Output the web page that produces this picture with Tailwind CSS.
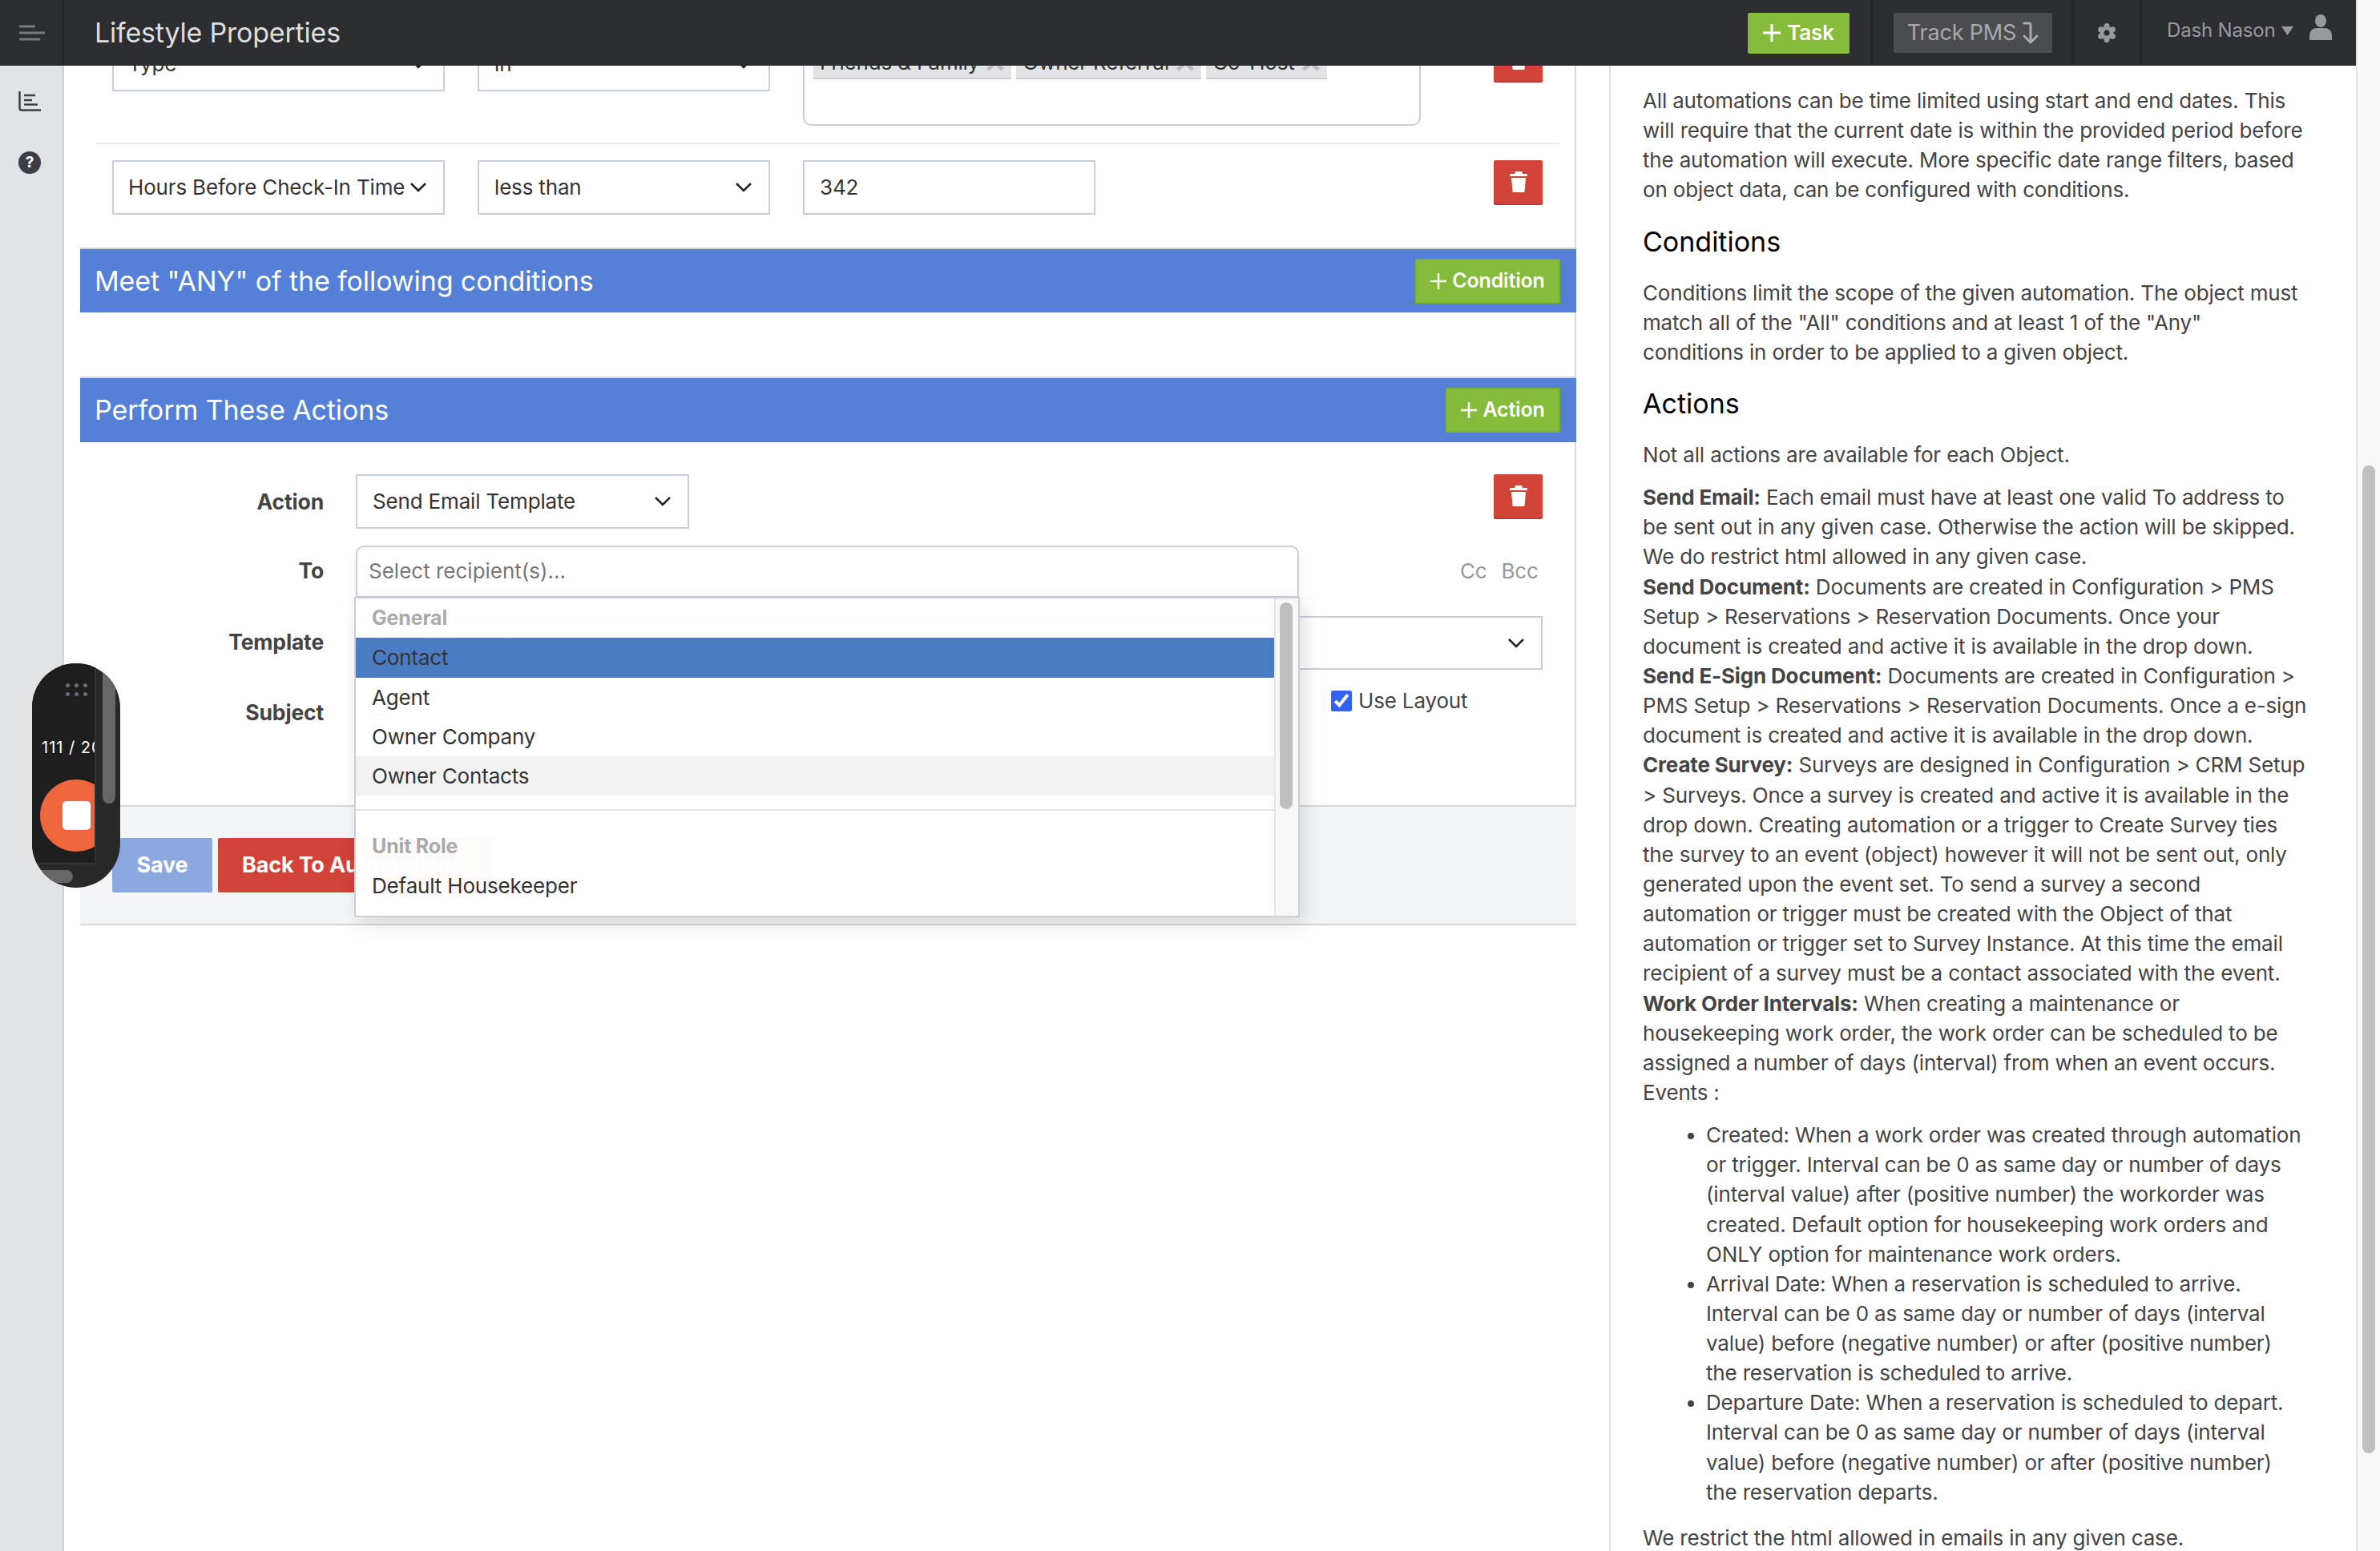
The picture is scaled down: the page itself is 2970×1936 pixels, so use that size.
<!DOCTYPE html>
<html>
  <head>
    <meta charset="UTF-8" />
    <title>Lifestyle Properties</title>
    <script src="https://cdn.jsdelivr.net/npm/@tailwindcss/browser@4"></script>
  </head>
  <body class="w-[2970px] h-[1936px] overflow-hidden flex bg-white text-[26px] leading-[37.14px] tracking-[-0.17px] text-[#444] font-['Inter','Liberation_Sans',sans-serif]">
    <div class="w-[2940px] flex flex-col relative">
      <!-- top bar -->
      <header class="h-[82px] shrink-0 flex items-stretch bg-[#2c2d31] relative z-30">
        <div class="w-[80px] border-r-2 border-[#232427] pl-[24px] flex items-center">
          <svg width="33" height="20" viewBox="0 0 33 20" fill="none" stroke="#77787c" stroke-width="3"><path d="M0 2H20M0 10H32M0 18H26" /></svg>
        </div>
        <div class="pl-[38px] flex items-center text-[34px] tracking-[-0.2px] text-[#dedede]">Lifestyle Properties</div>
        <div class="flex-1 flex justify-end items-center pr-[27px] border-r-2 border-[#232427]">
          <div class="w-[127px] h-[51px] bg-[#86bc3a] rounded-[2px] flex items-center justify-center gap-[8px] text-white font-semibold text-[26px]">
            <svg width="22" height="22" viewBox="0 0 22 22" stroke="#fff" stroke-width="3"><path d="M11 0V22M0 11H22" /></svg>
            Task
          </div>
        </div>
        <div class="w-[250px] flex items-center pl-[26px] border-r-2 border-[#232427]">
          <div class="w-[198px] h-[50px] bg-[#4b4c50] rounded-[2px] flex items-center justify-center gap-[8px] text-[#a9aaad] text-[27px]">
            Track PMS
            <svg width="20" height="28" viewBox="0 0 20 28" fill="none" stroke="#a9aaad" stroke-width="3" stroke-linecap="round" stroke-linejoin="round"><path d="M2 2H8Q10 2 10 4V26M2 18L10 26L18 18" /></svg>
          </div>
        </div>
        <div class="w-[86px] flex items-center justify-center border-r-2 border-[#232427]">
          <svg width="24" height="26" viewBox="0 0 24 26" fill="#98999c">
            <circle cx="12" cy="13" r="8.5" />
            <circle cx="12" cy="4.5" r="3.5" /><circle cx="12" cy="21.5" r="3.5" />
            <circle cx="4.6" cy="8.7" r="3.5" /><circle cx="19.4" cy="8.7" r="3.5" />
            <circle cx="4.6" cy="17.3" r="3.5" /><circle cx="19.4" cy="17.3" r="3.5" />
            <circle cx="12" cy="13" r="3.6" fill="#2c2d31" />
          </svg>
        </div>
        <div class="w-[267px] shrink-0 flex items-start pt-[19px] pl-[31px] text-[24px] text-[#98999c]">
          <span>Dash Nason</span>
          <svg class="ml-[7px] mt-[14px]" width="15" height="11" viewBox="0 0 15 11" fill="#98999c"><path d="M0 0H15L7.5 11Z" /></svg>
          <svg class="ml-[20px] -mt-[1px]" width="28" height="32" viewBox="0 0 28 32" fill="#98999c"><ellipse cx="14" cy="8" rx="7" ry="8" /><path d="M0 32V26C0 20 5 17 9 17H19C23 17 28 20 28 26V32Z" /></svg>
        </div>
      </header>

      <div class="flex-1 flex min-h-0">
        <!-- sidebar -->
        <aside class="w-[80px] shrink-0 bg-[#e2e3e5] border-r-2 border-[#cfd0d3] flex flex-col items-start pl-[23px] pt-[32px] gap-[50px]">
          <svg width="28" height="25" viewBox="0 0 28 25" fill="none" stroke="#3b3e49" stroke-width="2.5"><path d="M1.5 0V21Q1.5 23.5 4 23.5H28" /><path stroke-width="2.5" d="M7 5H21M7 11H17M7 16.5H24" /></svg>
          <div class="w-[28px] h-[28px] rounded-full bg-[#3b3e49] text-white text-[19px] leading-[28px] font-bold text-center">?</div>
        </aside>

        <!-- automation form -->
        <main class="w-[1928px] shrink-0 overflow-hidden relative">
          <div class="-mt-[36px] w-[1867px] border-r-2 border-[#d9d9d9] ml-[20px] text-[#333]">
            <div class="mr-[19px] ml-[20px] px-[20px] pb-[21px] border-b-2 border-[#eaeaea] flex items-start">
              <div class="w-[415px] h-[68px] mr-[41px] border-2 border-[#c9ced8] pl-[18px] pr-[21px] flex items-center justify-between">
                <span>Type</span>
                <svg width="20" height="12" viewBox="0 0 20 12" fill="none" stroke="#222" stroke-width="2.5"><path d="M1 1L10 10L19 1" /></svg>
              </div>
              <div class="w-[365px] h-[68px] mr-[41px] border-2 border-[#c9ced8] pl-[19px] pr-[21px] flex items-center justify-between">
                <span>in</span>
                <svg width="20" height="12" viewBox="0 0 20 12" fill="none" stroke="#222" stroke-width="2.5"><path d="M1 1L10 10L19 1" /></svg>
              </div>
              <div class="w-[771px] h-[111px] border-2 border-[#c9ced8] rounded-b-[10px] pl-[11px] pt-[11px] flex items-start gap-[6px]">
                <div class="h-[40px] bg-[#e2e3e5] border-b-2 border-[#cfcfcf] pl-[8px] pr-[9px] flex items-center gap-[9px]">Friends &amp; Family <svg width="22" height="22" viewBox="0 0 24 24" stroke="#bdbdbd" stroke-width="5"><path d="M2 2L22 22M22 2L2 22" /></svg></div>
                <div class="h-[40px] bg-[#e2e3e5] border-b-2 border-[#cfcfcf] pl-[8px] pr-[9px] flex items-center gap-[9px]">Owner Referral <svg width="22" height="22" viewBox="0 0 24 24" stroke="#bdbdbd" stroke-width="5"><path d="M2 2L22 22M22 2L2 22" /></svg></div>
                <div class="h-[40px] bg-[#e2e3e5] border-b-2 border-[#cfcfcf] pl-[8px] pr-[9px] flex items-center gap-[9px]">Co-Host <svg width="22" height="22" viewBox="0 0 24 24" stroke="#bdbdbd" stroke-width="5"><path d="M2 2L22 22M22 2L2 22" /></svg></div>
              </div>
              <div class="ml-auto mr-[1px] mt-[1px] w-[61px] h-[56px] bg-[#d24437] border-b-2 border-[#bb3a2f] rounded-[2px] flex items-center justify-center">
                <svg width="22" height="26" viewBox="0 0 22 26" fill="#fff"><path d="M7 0H15L16 3H22V6H0V3H6ZM2 8H20L18.5 25Q18.4 26 17 26H5Q3.6 26 3.5 25Z" /></svg>
              </div>
            </div>
            <div class="ml-[40px] mr-[39px] pt-[20px] pb-[41px] flex items-start">
              <div class="w-[415px] h-[68px] mr-[41px] border-2 border-[#c9ced8] pl-[18px] pr-[21px] flex items-center justify-between">
                <span>Hours Before Check-In Time</span>
                <svg width="20" height="12" viewBox="0 0 20 12" fill="none" stroke="#222" stroke-width="2.5"><path d="M1 1L10 10L19 1" /></svg>
              </div>
              <div class="w-[365px] h-[68px] mr-[41px] border-2 border-[#c9ced8] pl-[19px] pr-[21px] flex items-center justify-between">
                <span>less than</span>
                <svg width="20" height="12" viewBox="0 0 20 12" fill="none" stroke="#222" stroke-width="2.5"><path d="M1 1L10 10L19 1" /></svg>
              </div>
              <div class="w-[365px] h-[68px] border-2 border-[#c9ced8] pl-[19px] flex items-center">342</div>
              <div class="ml-auto mr-[1px] w-[61px] h-[56px] bg-[#d24437] border-b-2 border-[#bb3a2f] rounded-[2px] flex items-center justify-center">
                <svg width="22" height="26" viewBox="0 0 22 26" fill="#fff"><path d="M7 0H15L16 3H22V6H0V3H6ZM2 8H20L18.5 25Q18.4 26 17 26H5Q3.6 26 3.5 25Z" /></svg>
              </div>
            </div>

            <div class="-mr-[2px] h-[81px] border-t-2 border-[#d5d6da] bg-[#5480d8] pl-[18px] pr-[20px] flex items-center justify-between text-white text-[34px] tracking-[-0.1px]">
              <span>Meet "ANY" of the following conditions</span>
              <div class="w-[181px] h-[56px] bg-[#85bb3b] border-2 border-[#7cb036] flex items-center justify-center gap-[7px] text-[25px] font-semibold tracking-[-0.17px]">
                <svg width="20" height="20" viewBox="0 0 20 20" stroke="#fff" stroke-width="2.5"><path d="M10 0V20M0 10H20" /></svg>
                Condition
              </div>
            </div>
            <div class="h-[80px]"></div>
            <div class="-mr-[2px] h-[82px] border-t-2 border-[#d5d6da] bg-[#5480d8] pl-[18px] pr-[20px] flex items-center justify-between text-white text-[34px] tracking-[-0.1px]">
              <span>Perform These Actions</span>
              <div class="w-[143px] h-[56px] bg-[#85bb3b] border-2 border-[#7cb036] flex items-center justify-center gap-[7px] text-[25px] font-semibold tracking-[-0.17px]">
                <svg width="20" height="20" viewBox="0 0 20 20" stroke="#fff" stroke-width="2.5"><path d="M10 0V20M0 10H20" /></svg>
                Action
              </div>
            </div>

            <div class="pt-[40px] pb-[80px] pr-[40px] flex flex-col">
              <div class="flex items-start h-[68px] mb-[21px]">
                <label class="w-[304px] mr-[40px] h-[68px] leading-[68px] text-right font-bold text-[26.5px] text-[#444]">Action</label>
                <div class="w-[416px] h-[68px] border-2 border-[#c9ced8] pl-[19px] pr-[21px] flex items-center justify-between">
                  <span>Send Email Template</span>
                  <svg width="20" height="12" viewBox="0 0 20 12" fill="none" stroke="#222" stroke-width="2.5"><path d="M1 1L10 10L19 1" /></svg>
                </div>
                <div class="ml-auto w-[61px] h-[56px] bg-[#d24437] border-b-2 border-[#bb3a2f] rounded-[2px] flex items-center justify-center">
                  <svg width="22" height="26" viewBox="0 0 22 26" fill="#fff"><path d="M7 0H15L16 3H22V6H0V3H6ZM2 8H20L18.5 25Q18.4 26 17 26H5Q3.6 26 3.5 25Z" /></svg>
                </div>
              </div>
              <div class="flex items-start h-[65px] mb-[23px]">
                <label class="w-[304px] mr-[40px] h-[63px] leading-[63px] text-right font-bold text-[26.5px] text-[#444]">To</label>
                <div class="w-[1177px] h-[65px] border-2 border-[#c9ced8] rounded-t-[10px] pl-[14px] pb-[2px] flex items-center text-[#777] tracking-normal relative shadow-[0_4px_8px_rgba(0,0,0,0.06)]">Select recipient(s)...</div>
                <div class="ml-[201px] h-[63px] leading-[63px] text-[#999] flex gap-[18px]"><span>Cc</span><span>Bcc</span></div>
              </div>
              <div class="flex items-start h-[67px] mb-[21px]">
                <label class="w-[304px] mr-[40px] h-[65px] leading-[65px] text-right font-bold text-[26.5px] text-[#444]">Template</label>
                <div class="flex-1 h-[67px] border-2 border-[#c9ced8] pl-[19px] pr-[21px] flex items-center justify-between">
                  <span>Select Template</span>
                  <svg width="20" height="12" viewBox="0 0 20 12" fill="none" stroke="#222" stroke-width="2.5"><path d="M1 1L10 10L19 1" /></svg>
                </div>
              </div>
              <div class="flex items-start h-[68px]">
                <label class="w-[304px] mr-[40px] h-[64px] leading-[64px] text-right font-bold text-[26.5px] text-[#444]">Subject</label>
                <div class="w-[1177px] h-[68px] pl-[21px] flex items-center">--</div>
                <label class="ml-[40px] flex items-center gap-[8px] h-[36px] text-[#444]">
                  <input type="checkbox" checked class="w-[26px] h-[26px] accent-[#2f62f5]" />
                  Use Layout
                </label>
              </div>
            </div>

            <div class="h-[150px] -mr-[2px] bg-[#f4f5f7] border-y-2 border-[#d5d6da] pl-[40px] pt-[39px] flex items-start gap-[7px] text-white font-bold text-[27px]">
              <div class="w-[125px] h-[68px] rounded-[2px] bg-[#8ca8e0] flex items-center justify-center">Save</div>
              <div class="w-[343px] h-[68px] rounded-[2px] bg-[#d14338] flex items-center pl-[30px]">Back To Automations</div>
            </div>
          </div>

          <!-- recipient dropdown -->
          <div class="absolute left-[362px] top-[663px] z-20 w-[1180px] h-[400px] flex bg-white/98 border-2 border-[#ccced2] shadow-[6px_8px_24px_rgba(0,0,0,0.12)] text-[#333]">
            <ul class="flex-1 overflow-hidden">
              <li class="h-[49px] pl-[20px] pt-[6px] font-bold text-[#aaa] text-[25px]">General</li>
              <li class="h-[50px] pl-[20px] flex items-center bg-[#4a7cc3]">Contact</li>
              <li class="h-[50px] pl-[20px] flex items-center">Agent</li>
              <li class="h-[48px] pl-[20px] flex items-center">Owner Company</li>
              <li class="h-[49px] pl-[20px] flex items-center bg-[#f2f2f2]">Owner Contacts</li>
              <li class="h-[19px] border-b-2 border-[#e2e3e5]"></li>
              <li class="h-[50px] mt-[19px] pl-[20px] pt-[2px] flex items-center font-bold text-[#aaa] text-[25px]">Unit Role</li>
              <li class="h-[50px] pl-[20px] flex items-center">Default Housekeeper</li>
            </ul>
            <div class="w-[30px] bg-[#f8f8f8] border-l-2 border-[#e5e5e5] pl-[5px] pt-[5px]">
              <div class="w-[16px] h-[258px] rounded-full bg-[#bfbfbf]"></div>
            </div>
          </div>
        </main>

        <!-- help panel -->
        <section class="flex-1 border-l-2 border-[#e0e0e0] pl-[40px] pr-[58px] pt-[25px]">
          <p>All automations can be time limited using start and end dates. This will require that the current date is within the provided period before the automation will execute. More specific date range filters, based on object data, can be configured with conditions.</p>
          <h4 class="text-[34px] leading-[40px] tracking-normal text-black mt-[26px] mb-[25px]">Conditions</h4>
          <p>Conditions limit the scope of the given automation. The object must match all of the "All" conditions and at least 1 of the "Any"<br />conditions in order to be applied to a given object.</p>
          <h4 class="text-[34px] leading-[40px] tracking-normal text-black mt-[26px] mb-[25px]">Actions</h4>
          <p class="mb-[16px]">Not all actions are available for each Object.</p>
          <p><b class="font-bold">Send Email:</b> Each email must have at least one valid To address to be sent out in any given case. Otherwise the action will be skipped. We do restrict html allowed in any given case.</p>
          <p><b class="font-bold">Send Document:</b> Documents are created in Configuration &gt; PMS Setup &gt; Reservations &gt; Reservation Documents. Once your document is created and active it is available in the drop down.</p>
          <p><b class="font-bold">Send E-Sign Document:</b> Documents are created in Configuration &gt; PMS Setup &gt; Reservations &gt; Reservation Documents. Once a e-sign document is created and active it is available in the drop down.</p>
          <p><b class="font-bold">Create Survey:</b> Surveys are designed in Configuration &gt; CRM Setup &gt; Surveys. Once a survey is created and active it is available in the drop down. Creating automation or a trigger to Create Survey ties the survey to an event (object) however it will not be sent out, only generated upon the event set. To send a survey a second automation or trigger must be created with the Object of that automation or trigger set to Survey Instance. At this time the email recipient of a survey must be a contact associated with the event.</p>
          <p><b class="font-bold">Work Order Intervals:</b> When creating a maintenance or housekeeping work order, the work order can be scheduled to be assigned a number of days (interval) from when an event occurs. Events :</p>
          <ul class="list-disc pl-[79px] mt-[16px] mb-[20px]">
            <li>Created: When a work order was created through automation or trigger. Interval can be 0 as same day or number of days (interval value) after (positive number) the workorder was created. Default option for housekeeping work orders and ONLY option for maintenance work orders.</li>
            <li>Arrival Date: When a reservation is scheduled to arrive. Interval can be 0 as same day or number of days (interval value) before (negative number) or after (positive number)<br />the reservation is scheduled to arrive.</li>
            <li>Departure Date: When a reservation is scheduled to depart. Interval can be 0 as same day or number of days (interval value) before (negative number) or after (positive number)<br />the reservation departs.</li>
          </ul>
          <p>We restrict the html allowed in emails in any given case.</p>
        </section>
      </div>

      <!-- recorder widget -->
      <div class="absolute left-[40px] top-[828px] z-40 w-[110px] h-[280px] rounded-full overflow-hidden bg-[#282828]">
        <div class="w-[80px] h-[251px] overflow-hidden bg-[#1e1e1e] border-r-2 border-b-2 border-[#333] relative">
          <div class="absolute left-[42px] top-[25px] grid grid-cols-3 gap-x-[6px] gap-y-[6px]">
            <i class="w-[5px] h-[5px] rounded-full bg-[#6b6b78]"></i><i class="w-[5px] h-[5px] rounded-full bg-[#6b6b78]"></i><i class="w-[5px] h-[5px] rounded-full bg-[#6b6b78]"></i>
            <i class="w-[5px] h-[5px] rounded-full bg-[#6b6b78]"></i><i class="w-[5px] h-[5px] rounded-full bg-[#6b6b78]"></i><i class="w-[5px] h-[5px] rounded-full bg-[#6b6b78]"></i>
          </div>
          <div class="absolute left-[12px] top-[92px] text-[20px] leading-[26px] tracking-[1px] text-white whitespace-nowrap">111 / 200</div>
          <div class="absolute left-[10px] top-[145px] w-[90px] h-[90px] rounded-full bg-[#ef663c]"></div>
          <div class="absolute left-[38px] top-[172px] w-[35px] h-[36px] rounded-[5px] bg-white"></div>
        </div>
        <div class="absolute left-[88px] top-0 w-[16px] h-[175px] rounded-b-full bg-[#666]"></div>
        <div class="absolute left-0 top-[258px] w-[51px] h-[16px] rounded-r-full bg-[#666]"></div>
      </div>
    </div>

    <!-- page scrollbar -->
    <div class="w-[30px] bg-[#f8f8f8] border-l-2 border-[#e5e5e5] pl-[6px] pt-[581px]">
      <div class="w-[16px] h-[1233px] rounded-full bg-[#bfbfbf]"></div>
    </div>
  </body>
</html>
